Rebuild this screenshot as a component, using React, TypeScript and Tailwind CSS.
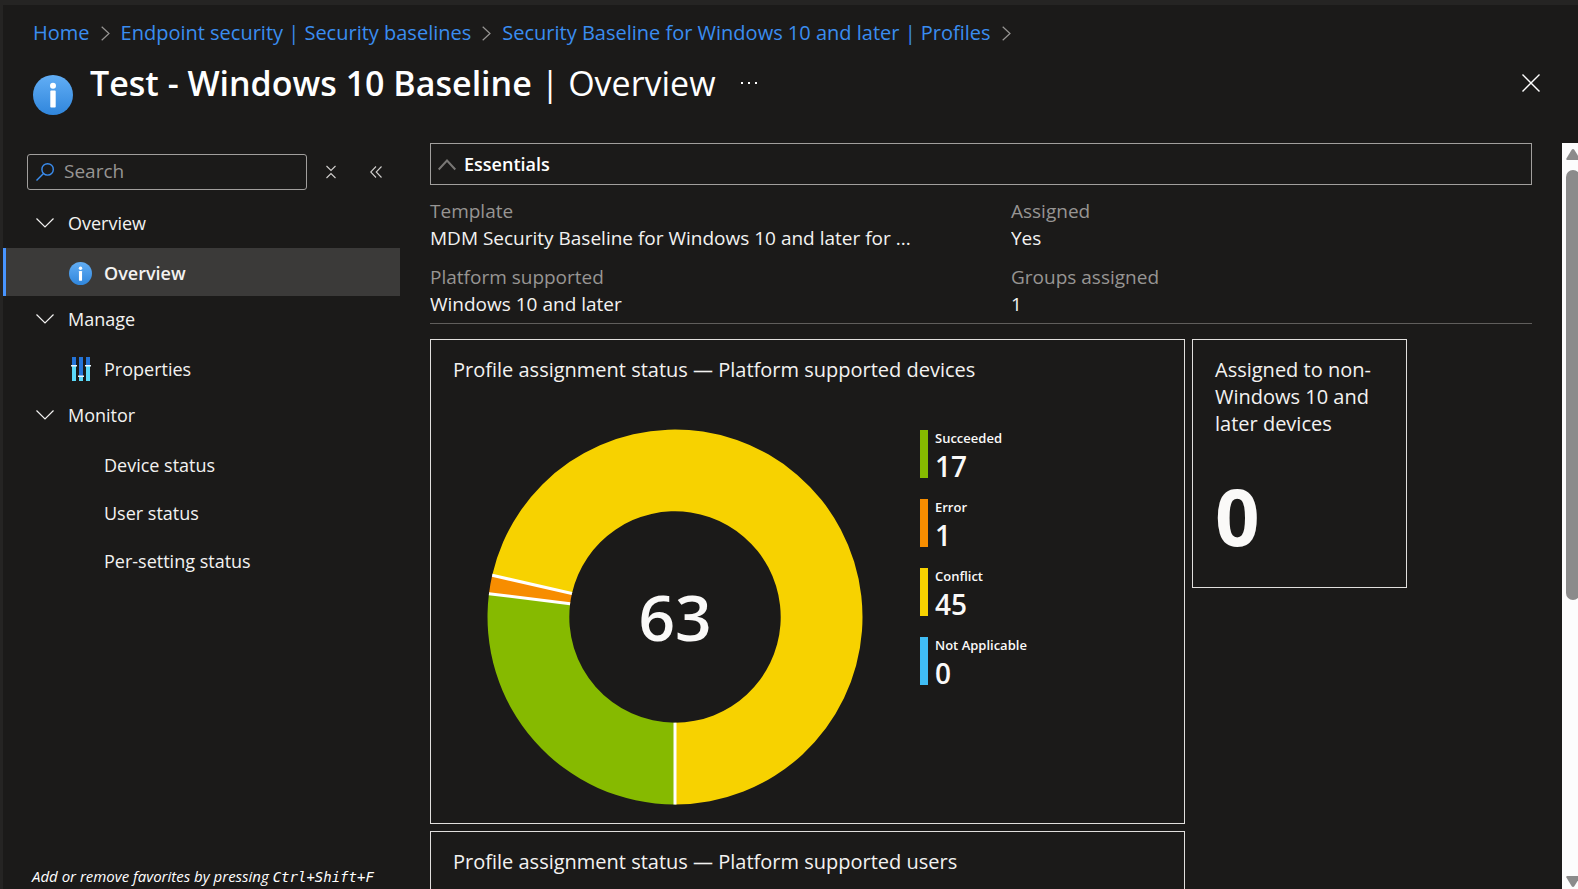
import type { ReactNode } from "react";

type Segment = { label: string; value: number; bar: string; fill: string };

const crumbs = ["Home", "Endpoint security | Security baselines", "Security Baseline for Windows 10 and later | Profiles"];

const essentials = [
  ["Template", "MDM Security Baseline for Windows 10 and later for ..."],
  ["Assigned", "Yes"],
  ["Platform supported", "Windows 10 and later"],
  ["Groups assigned", "1"],
];

const segments: Segment[] = [
  { label: "Succeeded", value: 17, bar: "bg-[#86ba00]", fill: "#86ba00" },
  { label: "Error", value: 1, bar: "bg-[#f78d00]", fill: "#f78d00" },
  { label: "Conflict", value: 45, bar: "bg-[#f7d200]", fill: "#f7d200" },
  { label: "Not Applicable", value: 0, bar: "bg-[#40bdf5]", fill: "#40bdf5" },
];

function InfoIcon({ id, className }: { id: string; className: string }) {
  return (
    <svg viewBox="0 0 40 40" className={className} aria-hidden="true">
      <defs>
        <linearGradient id={id} x1="0" y1="0" x2="0" y2="1">
          <stop offset="0" stopColor="#62aef5" />
          <stop offset="1" stopColor="#3086dc" />
        </linearGradient>
      </defs>
      <circle cx="20" cy="20" r="20" fill={`url(#${id})`} />
      <circle cx="20" cy="10.8" r="3" fill="#fff" />
      <rect x="17.3" y="15.6" width="5.4" height="17" rx="0.8" fill="#fff" />
    </svg>
  );
}

function PropertiesIcon() {
  return (
    <svg viewBox="0 0 20 24" className="h-6 w-5" aria-hidden="true">
      <path d="M1 0h4v9H1zM8 0h4v20H8zM15 0h4v9h-4z" fill="#2474d8" />
      <path d="M1 9h4v15H1zM8 20h4v4H8zM15 9h4v15h-4z" fill="#5cd9f8" />
      <path d="M0 8h6v1.4H0zM7 18.6h6V20H7zM14 8h6v1.4h-6z" fill="#e8f6fd" />
    </svg>
  );
}

function CrumbChevron() {
  return (
    <svg viewBox="0 0 9 15" className="h-[15px] w-[9px]" fill="none" stroke="#979593" strokeWidth="1.2" aria-hidden="true">
      <path d="M.7.7 8 7.5.7 14.3" />
    </svg>
  );
}

function NavGroup({ label, children }: { label: string; children: ReactNode }) {
  return (
    <li>
      <button className="flex h-12 w-full items-center gap-[14px] pl-[33px] pb-[2px] text-left">
        <svg viewBox="0 0 18 10" className="h-[10px] w-[18px]" fill="none" stroke="#f3f2f1" strokeWidth="1.2" aria-hidden="true">
          <path d="M.5.5 9 9 17.5.5" />
        </svg>
        {label}
      </button>
      <ul>{children}</ul>
    </li>
  );
}

function NavItem({ label, icon, active }: { label: string; icon?: ReactNode; active?: boolean }) {
  return (
    <li>
      <a
        href="#"
        aria-current={active ? "page" : undefined}
        className={`flex h-12 items-center gap-3 border-l-[3px] pt-[2px] pl-[63px] ${active ? "border-[#4894fe] bg-[#3b3a39] font-semibold" : "border-transparent"}`}
      >
        <span className="flex w-[23px] shrink-0 items-center justify-center">{icon}</span>
        {label}
      </a>
    </li>
  );
}

const CENTER = 188;
const OUTER = 187.5;
const INNER = 105.7;

// turn is a fraction of the circle, starting at the bottom and going clockwise
function point(turn: number, r: number) {
  const a = Math.PI / 2 + turn * 2 * Math.PI;
  return `${(CENTER + r * Math.cos(a)).toFixed(2)} ${(CENTER + r * Math.sin(a)).toFixed(2)}`;
}

function Donut({ data }: { data: Segment[] }) {
  const total = data.reduce((sum, s) => sum + s.value, 0);
  const slices = data
    .filter((s) => s.value > 0)
    .map((s, i, list) => {
      const from = list.slice(0, i).reduce((sum, x) => sum + x.value, 0) / total;
      return { ...s, from, to: from + s.value / total };
    });

  return (
    <div className="grid size-[376px] shrink-0 place-items-center">
      <svg viewBox="0 0 376 376" className="col-start-1 row-start-1 size-full" role="img" aria-label="Profile assignment status">
        {slices.map((s) => {
          const large = s.to - s.from > 0.5 ? 1 : 0;
          return (
            <path
              key={s.label}
              fill={s.fill}
              d={`M${point(s.from, OUTER)}A${OUTER} ${OUTER} 0 ${large} 1 ${point(s.to, OUTER)}L${point(s.to, INNER)}A${INNER} ${INNER} 0 ${large} 0 ${point(s.from, INNER)}Z`}
            />
          );
        })}
        {slices.map((s) => (
          <path key={s.label} d={`M${point(s.from, INNER)}L${point(s.from, OUTER)}`} stroke="#fff" strokeWidth="3" />
        ))}
      </svg>
      <span className="col-start-1 row-start-1 text-[64px] leading-none font-semibold text-[#faf9f8]">{total}</span>
    </div>
  );
}

export default function App() {
  return (
    <div className="flex h-screen flex-col overflow-hidden border-t-[5px] border-l-[3px] border-[#252423] bg-[#1b1a19] font-['Open_Sans','Noto_Sans',sans-serif] text-[19px] leading-[27px] text-[#f3f2f1]">
      <header className="flex h-[138px] shrink-0 flex-col pl-[30px]">
        <nav aria-label="Breadcrumb" className="pt-[14px]">
          <ol className="flex items-center text-[20px] leading-7 whitespace-nowrap text-[#3a8df0]">
            {crumbs.map((crumb) => (
              <li key={crumb} className="flex items-center">
                <a href="#">{crumb}</a>
                <span className="px-[11px]">
                  <CrumbChevron />
                </span>
              </li>
            ))}
          </ol>
        </nav>
        <div className="flex items-start pt-3 pr-[38px] text-white">
          <InfoIcon id="info-title" className="mt-4 size-10" />
          <h1 className="ml-[17px] text-[34px] leading-[48px] font-semibold whitespace-nowrap">
            Test - Windows 10 Baseline <span className="font-normal">| Overview</span>
          </h1>
          <button aria-label="More actions" className="ml-6 flex h-12 items-center">
            <svg viewBox="0 0 18 4" className="h-1 w-[18px]" fill="#fff" aria-hidden="true">
              <path d="M1 1h2v2H1zM8 1h2v2H8zM15 1h2v2h-2z" />
            </svg>
          </button>
          <button aria-label="Close" className="ml-auto flex h-12 items-center">
            <svg viewBox="0 0 18 18" className="size-[18px]" fill="none" stroke="#fff" strokeWidth="1.4" aria-hidden="true">
              <path d="M.5.5l17 17M17.5.5l-17 17" />
            </svg>
          </button>
        </div>
      </header>

      <div className="flex min-h-0 flex-1">
        <aside className="flex w-[397px] shrink-0 flex-col text-[18px]">
          <div className="flex items-center pt-[11px] pl-6">
            <label className="flex h-9 w-[280px] items-center gap-[10px] rounded-[3px] border border-[#a19f9d] pl-2">
              <svg viewBox="0 0 18 18" className="size-[18px] shrink-0" fill="none" stroke="#3a8df0" strokeWidth="1.4" aria-hidden="true">
                <circle cx="11.6" cy="6.4" r="5.7" />
                <path d="M7.5 10.5.5 17.5" />
              </svg>
              <input
                type="text"
                placeholder="Search"
                aria-label="Search"
                className="w-full min-w-0 bg-transparent pb-px text-[19px] outline-none placeholder:text-[#979593]"
              />
            </label>
            <button aria-label="Collapse all" className="ml-[18px]">
              <svg viewBox="0 0 12 14" className="h-[14px] w-3" fill="none" stroke="#d2d0ce" strokeWidth="1.1" aria-hidden="true">
                <path d="M1.500 1 6 5.500 10.500 1M1.500 13 6 8.500 10.500 13" />
              </svg>
            </button>
            <button aria-label="Hide menu" className="ml-[33px]">
              <svg viewBox="0 0 12 14" className="h-[14px] w-3" fill="none" stroke="#d2d0ce" strokeWidth="1.1" aria-hidden="true">
                <path d="M6 1.500.7 7 6 12.500M11.500 1.500 6.200 7l5.300 5.500" />
              </svg>
            </button>
          </div>

          <ul className="pt-[10px]">
            <NavGroup label="Overview">
              <NavItem label="Overview" active icon={<InfoIcon id="info-nav" className="size-[23px]" />} />
            </NavGroup>
            <NavGroup label="Manage">
              <NavItem label="Properties" icon={<PropertiesIcon />} />
            </NavGroup>
            <NavGroup label="Monitor">
              <NavItem label="Device status" />
              <NavItem label="User status" />
              <NavItem label="Per-setting status" />
            </NavGroup>
          </ul>

          <p className="mt-auto pl-[29px] text-[15px] leading-6 whitespace-nowrap text-white italic">
            Add or remove favorites by pressing <kbd className="font-['DejaVu_Sans_Mono',monospace] text-[14px]">Ctrl+Shift+F</kbd>
          </p>
        </aside>

        <main className="min-w-0 flex-1 overflow-hidden px-[30px]">
          <button className="flex h-[42px] w-full items-center gap-2 border border-[#a19f9d] pt-px pl-[7px] text-left text-[18px] font-semibold text-white">
            <svg viewBox="0 0 18 12" className="h-3 w-[18px]" fill="none" stroke="#797775" strokeWidth="2" aria-hidden="true">
              <path d="M.7 10.500 9 1.500l8.300 9" />
            </svg>
            Essentials
          </button>

          <dl className="grid grid-cols-2 gap-x-[60px] gap-y-3 border-b border-[#605e5c] pt-[13px] pb-[5px]">
            {essentials.map(([term, value]) => (
              <div key={term}>
                <dt className="text-[#979593]">{term}</dt>
                <dd className="truncate">{value}</dd>
              </div>
            ))}
          </dl>

          <div className="mt-[15px] flex items-start gap-[7px] text-[20px]">
            <div className="flex w-[755px] shrink-0 flex-col gap-[7px]">
              <section className="h-[485px] border border-[#e1dfdd] px-[22px] pt-4">
                <h2>Profile assignment status — Platform supported devices</h2>
                <div className="mt-[46px] flex items-start pl-[34px]">
                  <Donut data={segments} />
                  <ul className="ml-[57px] flex flex-col gap-[21px] pt-px">
                    {segments.map((s) => (
                      <li key={s.label} className="flex h-12 gap-[7px]">
                        <span className={`w-2 ${s.bar}`} />
                        <span className="flex flex-col font-semibold text-[#faf9f8]">
                          <span className="text-[13px] leading-4">{s.label}</span>
                          <span className="text-[28px] leading-[41px]">{s.value}</span>
                        </span>
                      </li>
                    ))}
                  </ul>
                </div>
              </section>
              <section className="h-[485px] border border-[#e1dfdd] px-[22px] pt-4">
                <h2>Profile assignment status — Platform supported users</h2>
              </section>
            </div>
            <section className="h-[249px] w-[215px] shrink-0 border border-[#e1dfdd] px-[22px] pt-4">
              <h2>Assigned to non-Windows 10 and later devices</h2>
              <p className="mt-[34px] text-[78px] leading-[90px] font-bold text-[#faf9f8]">0</p>
            </section>
          </div>
        </main>

        <div aria-hidden="true" className="flex w-4 shrink-0 flex-col items-center overflow-hidden bg-[#fcfcfc] pt-[6px] pl-[5px]">
          <svg viewBox="0 0 14 11" className="h-[11px] w-[14px] shrink-0" fill="#8b8b8b">
            <path d="M7 0q.8 0 1.300.8L13.600 9.500q.6 1.500-1 1.500H1.400q-1.600 0-1-1.500L5.700.8Q6.200 0 7 0z" />
          </svg>
          <div className="mt-[10px] h-[430px] w-[14px] shrink-0 rounded-full bg-[#8b8b8b]" />
          <svg viewBox="0 0 14 11" className="mt-auto mb-[2px] h-[11px] w-[14px] shrink-0" fill="#8b8b8b">
            <path d="M7 11q.8 0 1.300-.8L13.600 1.500q.6-1.500-1-1.500H1.400q-1.600 0-1 1.500L5.700 10.200Q6.200 11 7 11z" />
          </svg>
        </div>
      </div>
    </div>
  );
}
